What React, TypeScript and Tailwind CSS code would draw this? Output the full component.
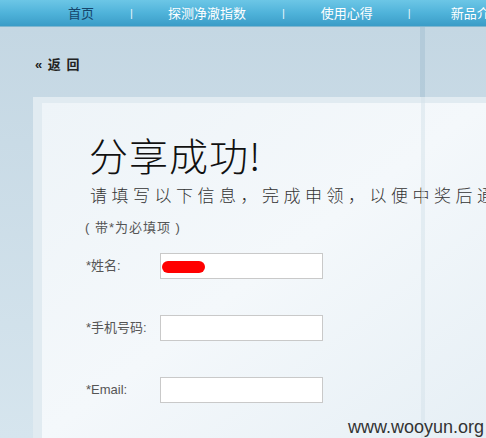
import React from "react"

const navItems = [
  { label: "首页", ml: "ml-0", active: true },
  { label: "探测净澈指数", ml: "ml-[35px]" },
  { label: "使用心得", ml: "ml-[36px]" },
  { label: "新品介绍", ml: "ml-[40px]" },
]

const sepMl = ["ml-[36px]", "ml-[36px]", "ml-[35px]"]

function NavBar() {
  return (
    <div className="h-[27px] shrink-0 border-b border-[#7fb6cf] bg-gradient-to-b from-[#6cc6e6] via-[#4fb3da] to-[#3a9cc7]">
      <div className="flex h-[26px] items-center whitespace-nowrap pl-[68px] text-[13px] leading-none">
        {navItems.map((item, i) => (
          <React.Fragment key={item.label}>
            {i > 0 && <span className={`${sepMl[i - 1]} text-[11px] text-[#e8f6fc]`}>|</span>}
            <span className={`${item.ml} ${item.active ? "text-[#16456b]" : "text-white"}`}>{item.label}</span>
          </React.Fragment>
        ))}
      </div>
    </div>
  )
}

function Field({ label, filled }: { label: string; filled?: boolean }) {
  return (
    <div className="flex h-[26px] items-center">
      <span className="w-[74px] text-[13px] text-[#555]">{label}</span>
      <div className="relative h-[26px] w-[163px] border border-[#c9c9c9] bg-white">
        {filled && (
          <div className="absolute left-[1px] top-[7px] h-[12px] w-[43px] rounded-[6px] bg-[#ff0000]" />
        )}
      </div>
    </div>
  )
}

export default function App() {
  return (
    <div
      className="relative flex h-[438px] w-[486px] flex-col overflow-hidden bg-[#c9dbe6]"
      style={{ fontFamily: '"Liberation Sans", Arial, "Noto Sans CJK SC", sans-serif' }}
    >
      <NavBar />
      <div className="flex flex-1 flex-col bg-gradient-to-b from-[#c4d7e3] to-[#d6e5ee]">
        <div className="flex h-[70px] items-center pl-[35px] pt-[6px]">
          <span className="text-[13px] font-bold tracking-[1px] text-[#222]">« 返 回</span>
        </div>
        <div className="ml-[33px] flex flex-1 flex-col bg-[#e1ebf1] pl-[9px] pt-[6px]">
          <div className="flex-1 bg-gradient-to-br from-[#eef4f8] via-[#f4f8fb] to-[#e6eff5] pl-[43px] pt-[26px]">
            <h1
              className="pl-[4px] text-[39px] leading-[50px] tracking-[1px] text-[#111]"
              style={{ fontFamily: '"Noto Sans CJK SC", sans-serif', fontWeight: 300 }}
            >
              分享成功!
            </h1>
            <p
              className="mt-[4px] whitespace-nowrap pl-[5px] text-[17px] leading-[24px] tracking-[4.5px] text-[#333]"
              style={{ fontFamily: '"Noto Sans CJK SC", sans-serif', fontWeight: 300 }}
            >
              请填写以下信息，完成申领，以便中奖后通知您
            </p>
            <p className="mt-[13px] text-[13px] leading-[16px] tracking-[1px] text-[#555]">( 带*为必填项 )</p>
            <div className="mt-[17px] flex flex-col gap-[36px] pl-[1px]">
              <Field label="*姓名:" filled />
              <Field label="*手机号码:" />
              <Field label="*Email:" />
            </div>
          </div>
        </div>
      </div>
      <div className="pointer-events-none absolute left-[420px] top-[27px] h-[70px] w-[5px] bg-[#a9c3d4] opacity-60" />
      <div className="pointer-events-none absolute bottom-0 left-[421px] top-[97px] w-[4px] bg-[#d4e2ea] opacity-50" />
      <span className="absolute bottom-[1px] right-[2px] text-[18px] leading-[20px] text-[#333]">www.wooyun.org</span>
    </div>
  )
}
